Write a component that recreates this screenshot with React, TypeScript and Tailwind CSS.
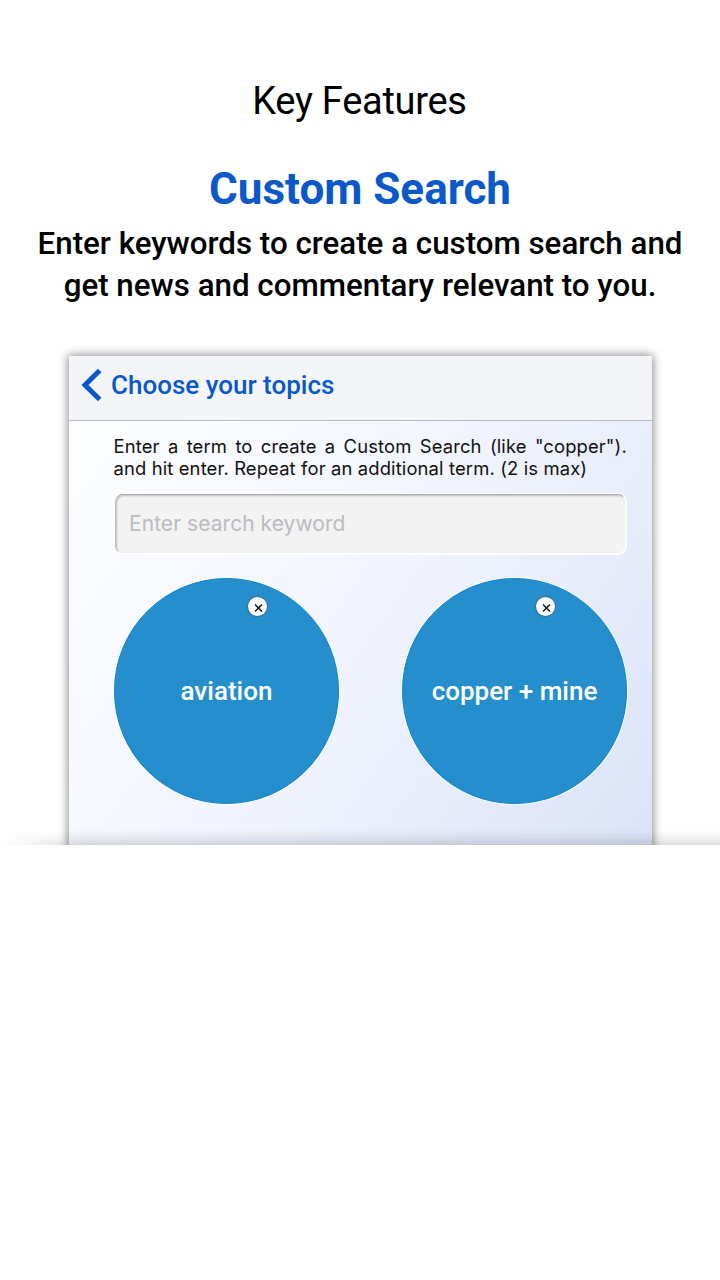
import React from "react";

function Topic({ label }: { label: string }) {
  return (
    <div className="relative flex h-[226px] w-[225px] items-center justify-center rounded-full border border-[#0f84c6] bg-[#248fcc] shadow-[0_0_1px_1px_rgba(255,255,255,0.7)]">
      <span className="whitespace-nowrap text-[26px] font-medium leading-8 text-white">{label}</span>
      <button
        aria-label={"Remove " + label}
        className="absolute left-[133px] top-[18px] flex h-[19px] w-[19px] items-center justify-center rounded-full bg-white shadow-[0_0_1px_1px_rgba(70,80,90,0.5)]"
      >
        <svg viewBox="0 0 20 20" className="h-5 w-5 shrink-0" fill="none" stroke="#111" strokeWidth="1.5">
          <path d="M7 7.5L14 14.5M14 7.5L7 14.5" />
        </svg>
      </button>
    </div>
  );
}

export default function App() {
  return (
    <main className="h-[1280px] w-[720px] overflow-hidden bg-white font-['Roboto',sans-serif] text-black">
      <div className="relative flex h-[845px] flex-col items-center overflow-hidden">
        <p className="mt-[78px] -ml-px whitespace-nowrap text-[38px] leading-[46px] tracking-[-0.28px]">Key Features</p>
        <h1 className="mt-[39px] whitespace-nowrap text-[44px] font-bold leading-[52px] text-[#0a58ca]">Custom Search</h1>
        <div className="mt-2 flex flex-col items-center whitespace-nowrap text-[31.3px] font-medium leading-[42px]">
          <span>Enter keywords to create a custom search and</span>
          <span>get news and commentary relevant to you.</span>
        </div>
        <section className="ml-px mt-[49px] flex h-[520px] w-[583px] shrink-0 flex-col bg-linear-[125deg,#fcfdff_10%,#f2f5fe_48%,#dce4f8_95%] shadow-[0_0_9px_1px_rgba(0,0,0,0.46)]">
          <header className="flex h-[65px] shrink-0 items-center border-b border-[#b9babf] bg-[#f4f5f9] pb-[7px] pl-3">
            <svg viewBox="0 0 22 34" className="h-[34px] w-[22px]" fill="none" stroke="#0a58ca" strokeWidth="5">
              <path d="M18.7 2.5L4 17L18.7 31.5" />
            </svg>
            <h2 className="ml-2 whitespace-nowrap text-[26px] font-medium leading-8 text-[#0a58ca]">Choose your topics</h2>
          </header>
          <div className="ml-[44.5px] mt-[14px] flex w-[513.5px] flex-col whitespace-nowrap font-['Inter',sans-serif] text-[18.4px] leading-[22px] tracking-[0.14px] text-[#111]">
            <span className="flex justify-between">
              {["Enter", "a", "term", "to", "create", "a", "Custom", "Search", "(like", '"copper").'].map((w, i) => (
                <span key={i}>{w}</span>
              ))}
            </span>
            <span>and hit enter. Repeat for an additional term. (2 is max)</span>
          </div>
          <input
            placeholder="Enter search keyword"
            className="ml-[46px] mt-[15px] h-[60px] w-[511px] shrink-0 rounded-lg border border-t-[#aaacb0] border-r-white border-b-white border-l-[#bcbec3] bg-[#f3f3f3] px-[13px] pb-0.5 font-['Inter',sans-serif] text-[21px] tracking-[0.05px] shadow-[inset_1px_1px_2px_rgba(0,0,0,0.22),0_0_1px_1px_rgba(255,255,255,0.8)] outline-none placeholder:text-[#bbbbc1]"
          />
          <div className="ml-[45px] mt-6 flex w-[513px] shrink-0 justify-between">
            <Topic label="aviation" />
            <Topic label="copper + mine" />
          </div>
        </section>
        <div className="pointer-events-none absolute bottom-0 left-0 h-[15px] w-[720px] bg-linear-to-t from-black/13 via-black/5 to-transparent mask-l-from-88% mask-l-to-100%" />
      </div>
    </main>
  );
}
